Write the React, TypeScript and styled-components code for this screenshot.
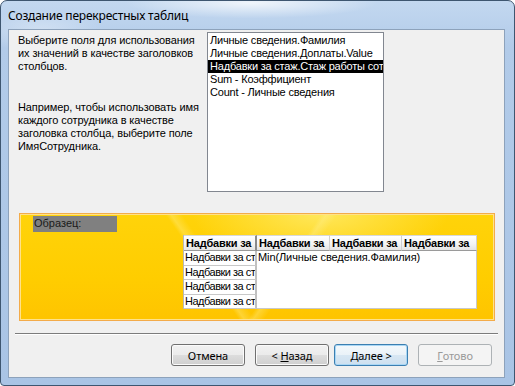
import styled, { createGlobalStyle } from "styled-components";

const GlobalStyle = createGlobalStyle`
  html, body {
    margin: 0;
    padding: 0;
    background: #ffffff;
  }
  body {
    font-family: "Liberation Sans", Arial, sans-serif;
  }
`;

const Window = styled.div`
  width: 515px;
  height: 386px;
  box-sizing: border-box;
  display: flex;
  flex-direction: column;
  border: 1px solid #3e5670;
  border-radius: 7px 7px 4px 4px;
  overflow: hidden;
  background:
    radial-gradient(ellipse 180px 22px at 250px 2px, rgba(255, 255, 255, 0.75), rgba(255, 255, 255, 0) 70%),
    radial-gradient(ellipse 90px 30px at 40px 30px, rgba(255, 255, 255, 0.35), rgba(255, 255, 255, 0) 70%),
    linear-gradient(to bottom, #c3d8f0 0%, #b2cbe9 12%, #a9c4e5 100%);
`;

const TitleBar = styled.div`
  height: 28px;
  flex: none;
  display: flex;
  align-items: center;
  padding-left: 7px;
  font-family: "Noto Sans", "Open Sans", sans-serif;
  font-size: 12px;
  color: #000;
  letter-spacing: -0.2px;
`;

const Client = styled.div`
  flex: 1;
  margin: 0 9px 7px 7px;
  background: #f0f0f0;
  border: 1px solid #8da2bb;
  display: flex;
  flex-direction: column;
  font-size: 11px;
  color: #000;
`;

const TopSection = styled.div`
  display: flex;
  margin-top: 2px;
  height: 160px;
`;

const Hint = styled.div`
  width: 189px;
  padding: 2px 0 0 9px;
  line-height: 13px;
  white-space: nowrap;
  letter-spacing: -0.1px;
`;

const HintPara = styled.p<{ $gap?: number }>`
  margin: ${(p) => p.$gap ?? 0}px 0 0;
`;

const ListBox = styled.div`
  width: 177px;
  height: 160px;
  box-sizing: border-box;
  border: 1px solid #828790;
  background: #fff;
  padding-top: 1px;
`;

const ListItem = styled.div<{ $selected?: boolean }>`
  height: 13px;
  line-height: 13px;
  padding-left: 2px;
  white-space: nowrap;
  overflow: hidden;
  letter-spacing: -0.2px;
  background: ${(p) => (p.$selected ? "#000" : "transparent")};
  color: ${(p) => (p.$selected ? "#fff" : "#000")};
`;

const Sample = styled.div`
  margin: 21px 0 0 10px;
  width: 476px;
  height: 108px;
  box-sizing: border-box;
  border: 1px solid #f3ab4a;
  box-shadow: inset 0 0 0 1px #ffe28a;
  padding: 2px 0 0 13px;
  background:
    linear-gradient(125deg, rgba(255, 255, 255, 0) 55%, rgba(255, 240, 150, 0.35) 56%, rgba(255, 255, 255, 0) 58%),
    linear-gradient(55deg, rgba(255, 255, 255, 0) 40%, rgba(255, 240, 150, 0.35) 41%, rgba(255, 255, 255, 0) 43%),
    radial-gradient(ellipse 160px 60px at 300px 0px, rgba(255, 236, 110, 0.8), rgba(255, 236, 110, 0) 80%),
    linear-gradient(to bottom, #ffd30a 0%, #ffcd00 60%, #fec400 100%);
  display: flex;
  flex-direction: column;
`;

const SampleLabel = styled.div`
  width: 84px;
  height: 16px;
  line-height: 15px;
  background: #808080;
  color: #1a1a1a;
  padding-left: 1px;
  box-sizing: border-box;
`;

const Grid = styled.div`
  margin: 3px 0 0 150px;
  width: 293px;
  display: grid;
  grid-template-columns: 73px 73px 72px 75px;
  grid-template-rows: 16px repeat(4, 14.5px);
  background: #fff;
  border-left: 1px solid #b8b8b8;
`;

const HeadCell = styled.div<{ $first?: boolean }>`
  font-weight: bold;
  line-height: 15px;
  padding-left: 2px;
  white-space: nowrap;
  overflow: hidden;
  letter-spacing: -0.2px;
  background: linear-gradient(to bottom, #ffffff 0%, #f4f4f4 55%, #e4e4e4 100%);
  border-top: 1px solid #d8d8d8;
  border-bottom: 1px solid #9a9a9a;
  border-right: ${(p) => (p.$first ? "2px solid #8a8a8a" : "1px solid #d0d0d0")};
  box-sizing: border-box;
`;

const RowCell = styled.div<{ $row: number }>`
  grid-column: 1;
  grid-row: ${(p) => p.$row};
  line-height: 13px;
  padding-left: 1px;
  white-space: nowrap;
  overflow: hidden;
  letter-spacing: -0.5px;
  border-bottom: 1px solid #c8c8c8;
  border-right: 2px solid #c0c0c0;
  box-sizing: border-box;
`;

const DataArea = styled.div`
  grid-column: 2 / 5;
  grid-row: 2 / 6;
  line-height: 13px;
  padding-left: 1px;
  white-space: nowrap;
  letter-spacing: -0.1px;
  border-bottom: 1px solid #c8c8c8;
  border-right: 1px solid #c8c8c8;
`;

const Separator = styled.div`
  margin: 12px 0 0 6px;
  width: 483px;
  border-top: 1px solid #7c7c7c;
  border-bottom: 1px solid #ffffff;
`;

const ButtonRow = styled.div`
  display: flex;
  justify-content: flex-end;
  margin-top: 9px;
  padding-right: 12px;
`;

const Button = styled.div<{ $gap: number; $focused?: boolean; $disabled?: boolean }>`
  width: 74px;
  height: 22px;
  box-sizing: border-box;
  margin-left: ${(p) => p.$gap}px;
  display: flex;
  align-items: center;
  justify-content: center;
  font-family: "Noto Sans", "Open Sans", sans-serif;
  font-size: 11px;
  letter-spacing: -0.1px;
  border-radius: 3px;
  border: 1px solid ${(p) => (p.$focused ? "#3c7fb1" : p.$disabled ? "#adb2b5" : "#707070")};
  color: ${(p) => (p.$disabled ? "#9a9a9a" : "#000")};
  background: ${(p) =>
    p.$disabled
      ? "#f4f4f4"
      : p.$focused
      ? "linear-gradient(to bottom, #f4f9fc 0%, #eaf2f8 50%, #d8e7f3 50%, #cde0f0 100%)"
      : "linear-gradient(to bottom, #f2f2f2 0%, #ebebeb 50%, #dddddd 50%, #cfcfcf 100%)"};
  box-shadow: ${(p) =>
    p.$focused ? "inset 0 0 0 1px #a9d7f5" : p.$disabled ? "none" : "inset 0 0 0 1px #fbfbfb"};
`;

const Key = styled.span`
  text-decoration: underline;
`;

const listItems = [
  "Личные сведения.Фамилия",
  "Личные сведения.Доплаты.Value",
  "Надбавки за стаж.Стаж работы сот",
  "Sum - Коэффициент",
  "Count - Личные сведения",
];

export default function App() {
  return (
    <>
      <GlobalStyle />
      <Window>
        <TitleBar>Создание перекрестных таблиц</TitleBar>
        <Client>
          <TopSection>
            <Hint>
              <HintPara>
                Выберите поля для использования
                <br />
                их значений в качестве заголовков
                <br />
                столбцов.
              </HintPara>
              <HintPara $gap={28}>
                Например, чтобы использовать имя
                <br />
                каждого сотрудника в качестве
                <br />
                заголовка столбца, выберите поле
                <br />
                ИмяСотрудника.
              </HintPara>
            </Hint>
            <ListBox>
              {listItems.map((item, i) => (
                <ListItem key={item} $selected={i === 2}>
                  {item}
                </ListItem>
              ))}
            </ListBox>
          </TopSection>
          <Sample>
            <SampleLabel>Образец:</SampleLabel>
            <Grid>
              <HeadCell $first>Надбавки за</HeadCell>
              <HeadCell>Надбавки за</HeadCell>
              <HeadCell>Надбавки за</HeadCell>
              <HeadCell>Надбавки за</HeadCell>
              <RowCell $row={2}>Надбавки за ст</RowCell>
              <DataArea>Min(Личные сведения.Фамилия)</DataArea>
              <RowCell $row={3}>Надбавки за ст</RowCell>
              <RowCell $row={4}>Надбавки за ст</RowCell>
              <RowCell $row={5}>Надбавки за ст</RowCell>
            </Grid>
          </Sample>
          <Separator />
          <ButtonRow>
            <Button $gap={0}>Отмена</Button>
            <Button $gap={10}>
              &lt;&nbsp;<Key>Н</Key>азад
            </Button>
            <Button $gap={5} $focused>
              <Key>Д</Key>алее &gt;
            </Button>
            <Button $gap={10} $disabled>
              <Key>Г</Key>отово
            </Button>
          </ButtonRow>
        </Client>
      </Window>
    </>
  );
}
